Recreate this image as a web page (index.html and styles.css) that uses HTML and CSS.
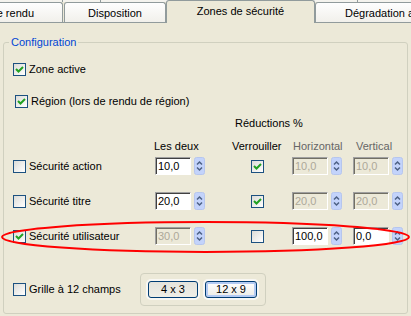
FILE: index.html
```html
<!DOCTYPE html>
<html lang="fr">
<head>
    <meta charset="UTF-8">
    <title>Zones de sécurité</title>
    <link rel="stylesheet" href="styles.css">
</head>
<body>
    <svg class="defs" width="0" height="0">
        <symbol id="spin" viewBox="0 0 11 18">
            <rect x="0.5" y="0.5" width="10" height="17" rx="2" fill="#c3d3fb" stroke="#b6c6ee"/>
            <path d="M3 7.5 5.5 5 8 7.5M3 10.5 5.5 13 8 10.5" fill="none" stroke="#4d6185" stroke-width="1.5"/>
        </symbol>
        <symbol id="tick" viewBox="0 0 11 11">
            <path d="M2 5 4.5 7.5 9 3" fill="none" stroke="#21a121" stroke-width="2"/>
        </symbol>
    </svg>

    <div class="tabs-back"><span class="b1"></span><span class="b2"></span><span class="b3"></span></div>
    <div class="tabbar">
        <div class="tab first">Options de rendu</div>
        <div class="tab layout">Disposition</div>
        <div class="tab active">Zones de sécurité</div>
        <div class="tab last">Dégradation avancée</div>
    </div>

    <fieldset class="group">
        <legend>Configuration</legend>

        <label class="check opt-zone"><span class="cb"><svg width="11" height="11"><use href="#tick"/></svg></span>Zone active</label>
        <label class="check opt-region"><span class="cb"><svg width="11" height="11"><use href="#tick"/></svg></span>Région (lors de rendu de région)</label>

        <div class="reduc">Réductions %</div>

        <div class="heads">
            <span></span>
            <span>Les deux</span>
            <span>Verrouiller</span>
            <span class="off h-horiz">Horizontal</span>
            <span class="off h-vert">Vertical</span>
        </div>

        <div class="rows">
            <label class="check"><span class="cb"></span>Sécurité action</label>
            <div class="spinbox both"><input type="text" value="10,0"><svg width="11" height="18"><use href="#spin"/></svg></div>
            <span class="cb lock"><svg width="11" height="11"><use href="#tick"/></svg></span>
            <div class="spinbox"><input type="text" value="10,0" disabled><svg width="11" height="18"><use href="#spin"/></svg></div>
            <div class="spinbox"><input type="text" value="10,0" disabled><svg width="11" height="18"><use href="#spin"/></svg></div>

            <label class="check"><span class="cb"></span>Sécurité titre</label>
            <div class="spinbox both"><input type="text" value="20,0"><svg width="11" height="18"><use href="#spin"/></svg></div>
            <span class="cb lock"><svg width="11" height="11"><use href="#tick"/></svg></span>
            <div class="spinbox"><input type="text" value="20,0" disabled><svg width="11" height="18"><use href="#spin"/></svg></div>
            <div class="spinbox"><input type="text" value="20,0" disabled><svg width="11" height="18"><use href="#spin"/></svg></div>

            <label class="check"><span class="cb"><svg width="11" height="11"><use href="#tick"/></svg></span>Sécurité utilisateur</label>
            <div class="spinbox both"><input type="text" value="30,0" disabled><svg width="11" height="18"><use href="#spin"/></svg></div>
            <span class="cb lock"></span>
            <div class="spinbox"><input type="text" value="100,0"><svg width="11" height="18"><use href="#spin"/></svg></div>
            <div class="spinbox"><input type="text" value="0,0"><svg width="11" height="18"><use href="#spin"/></svg></div>
        </div>

        <div class="bottom">
            <label class="check"><span class="cb"></span>Grille à 12 champs</label>
            <div class="presets">
                <button class="btn btn-small">4 x 3</button>
                <button class="btn btn-big">12 x 9</button>
            </div>
        </div>
    </fieldset>

    <svg class="mark" width="411" height="316">
        <ellipse cx="205.5" cy="237" rx="203.5" ry="15" fill="none" stroke="#ff0000" stroke-width="2"/>
    </svg>
</body>
</html>
```

FILE: styles.css
```css
*{
    box-sizing: border-box;
}
body{
    margin: 0;
    width: 411px;
    height: 316px;
    overflow: hidden;
    position: relative;
    background-color: #ece9d8;
    font: 11px/13px "Liberation Sans", Arial, sans-serif;
    color: #000000;
}
.defs{
    position: absolute;
}

/* tabs */
.tabs-back{
    display: flex;
    height: 2px;
    background-color: #f4f3ee;
}
.tabs-back span{
    flex-shrink: 0;
    border-right: 1px solid #919b9c;
}
.tabs-back .b1{ width: 63px; }
.tabs-back .b2{ width: 38px; }
.tabs-back .b3{ width: 257px; }
.tabbar{
    display: flex;
    align-items: flex-end;
    height: 21px;
    border-bottom: 1px solid #919b9c;
}
.tab{
    flex-shrink: 0;
    display: flex;
    justify-content: center;
    height: 20px;
    padding-top: 4px;
    border: 1px solid #919b9c;
    border-bottom: none;
    border-radius: 3px 3px 0 0;
    background: linear-gradient(#fefefe, #f1f0eb);
    white-space: nowrap;
    overflow: hidden;
}
.tab.first{
    width: 63px;
    justify-content: flex-end;
    padding-right: 28px;
    border-left: none;
    border-top-left-radius: 0;
}
.tab.layout{
    width: 102px;
    margin-left: 1px;
}
.tab.active{
    width: 149px;
    height: 23px;
    margin-bottom: -1px;
    background: #ece9d8;
}
.tab.last{
    width: 100px;
    justify-content: flex-start;
    padding-left: 29px;
}

/* group box */
.group{
    margin: 13px 3px 0;
    height: 278px;
    padding: 0 0 0 9px;
    border: 1px solid #d0d0bf;
    border-radius: 3px;
    min-width: 0;
}
.group legend{
    margin-left: -4px;
    padding: 0 2px;
    color: #0046d5;
    line-height: 13px;
}
.check{
    display: flex;
    align-items: center;
    gap: 3px;
    height: 13px;
    white-space: nowrap;
}
.cb{
    flex-shrink: 0;
    display: flex;
    width: 13px;
    height: 13px;
    border: 1px solid #1c5180;
    background: linear-gradient(135deg, #dcdcd7, #ffffff);
}
.opt-zone{
    margin-top: 14px;
}
.opt-region{
    margin-top: 19px;
    margin-left: 2px;
}
.reduc{
    margin-top: 9px;
    padding-left: 222px;
}
.heads,
.rows{
    display: grid;
    grid-template-columns: 141px 78px 60px 61px 1fr;
}
.heads{
    margin-top: 10px;
}
.off{
    color: #666666;
}
.h-horiz{ padding-left: 1px; }
.h-vert{ padding-left: 3px; }
.rows{
    margin-top: 4px;
    grid-auto-rows: 18px;
    row-gap: 17px;
    align-items: center;
}
.spinbox{
    display: flex;
    gap: 3px;
    height: 18px;
}
.spinbox svg{
    display: block;
}
.spinbox.both{
    margin-left: 1px;
}
.spinbox input{
    width: 36px;
    height: 18px;
    margin: 0;
    padding: 0 0 0 2px;
    border: 1px solid;
    border-color: #a0a0a0 #ffffff #ffffff #a0a0a0;
    box-shadow: inset 1px 1px #404040;
    background-color: #ffffff;
    font: inherit;
    color: #000000;
}
.spinbox input:disabled{
    background-color: #ece9d8;
    color: #aca899;
    box-shadow: inset 1px 1px #716f64;
}
.lock{
    margin-left: 19px;
}

/* bottom */
.bottom{
    display: flex;
    align-items: center;
    margin-top: 28px;
}
.bottom .check{
    width: 127px;
}
.presets{
    display: flex;
    align-items: center;
    gap: 7px;
    width: 126px;
    height: 33px;
    padding-left: 7px;
    border: 1px solid #d0d0bf;
    border-radius: 4px;
}
.btn{
    height: 17px;
    padding: 0;
    border: 1px solid #003c74;
    border-radius: 3px;
    background: linear-gradient(#ffffff, #ecebe6);
    box-shadow: 0 0 0 2px #f8f7f3;
    font: inherit;
    color: #000000;
}
.btn-small{
    width: 50px;
    background: linear-gradient(#e4e3dc, #efeee7);
}
.btn-big{
    width: 52px;
    box-shadow: inset 0 0 0 2px #b4cbf3, 0 0 0 2px #f8f7f3;
}

.mark{
    position: absolute;
    left: 0;
    top: 0;
    pointer-events: none;
}
```
